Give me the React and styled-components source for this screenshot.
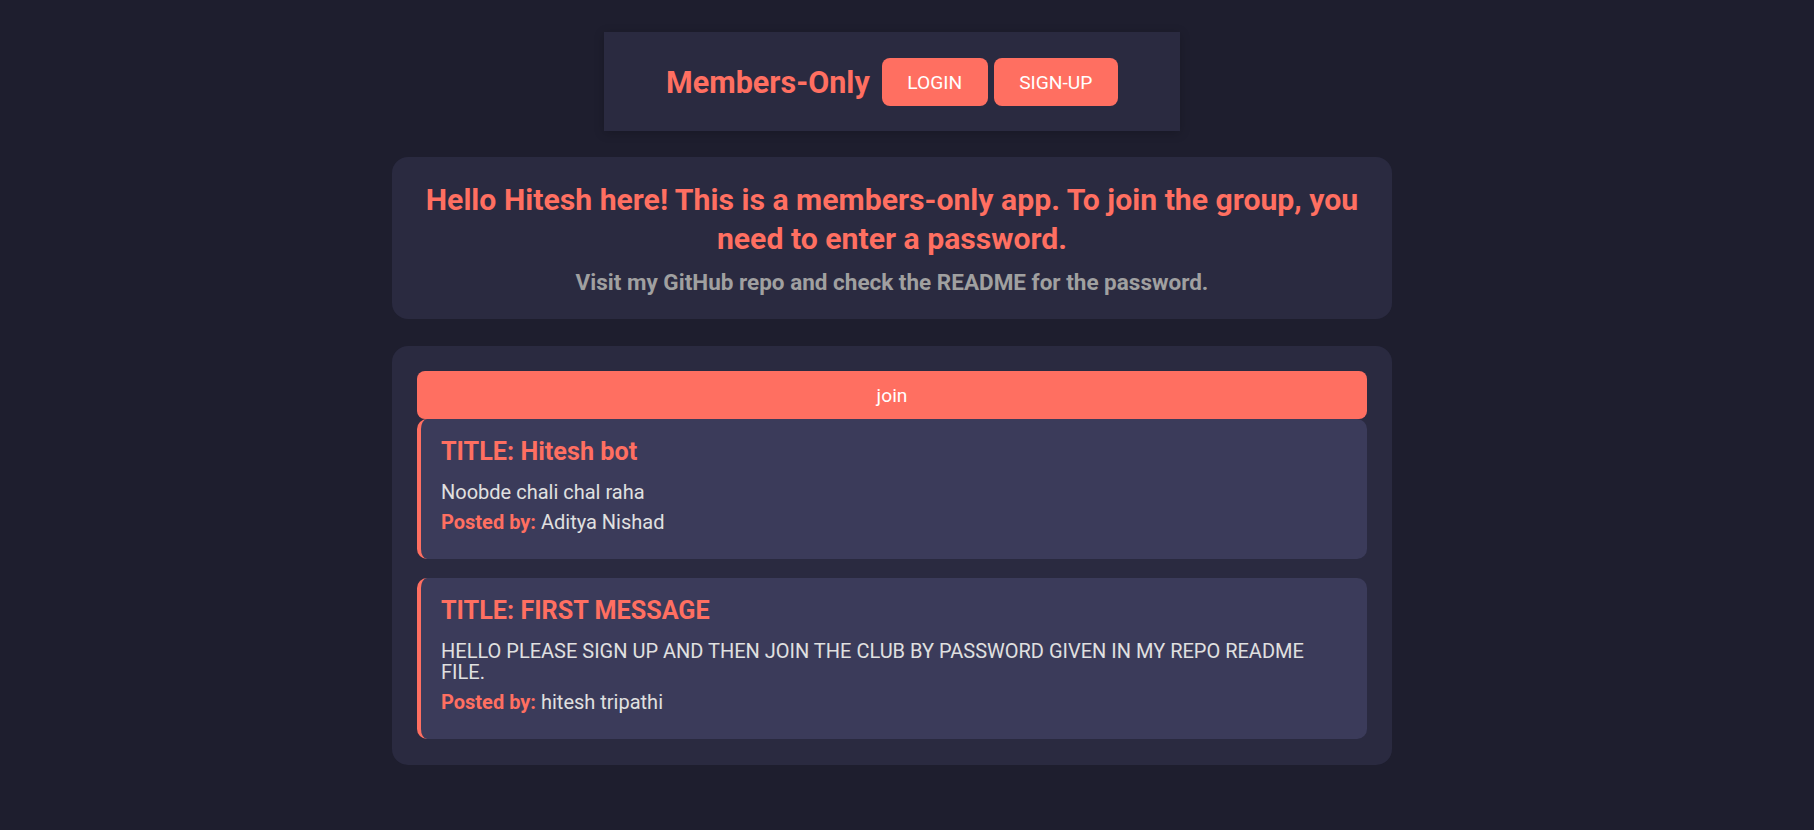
import React from "react";
import styled, { createGlobalStyle } from "styled-components";

const GlobalStyle = createGlobalStyle`
  body {
    margin: 0;
    background-color: #1e1e2e;
    font-family: Roboto, "Liberation Sans", sans-serif;
    color: #e0e0e0;
  }
`;

const Page = styled.div`
  display: flex;
  flex-direction: column;
  align-items: center;
  padding: 32px 30px 40px 0;
`;

const Nav = styled.nav`
  display: flex;
  align-items: center;
  gap: 12px;
  padding: 26px 62px 25px;
  background-color: #2a2a40;
  box-shadow: 0 2px 10px rgba(0, 0, 0, 0.2);
`;

const Brand = styled.h1`
  margin: 0;
  font-size: 30.5px;
  font-weight: 700;
  color: #ff6f61;
`;

const NavLinks = styled.div`
  display: flex;
  gap: 6px;
`;

const NavButton = styled.a`
  display: flex;
  align-items: center;
  justify-content: center;
  height: 48px;
  padding: 0 25.5px;
  background-color: #ff6f61;
  color: #fff;
  border-radius: 8px;
  font-size: 19.2px;
  text-decoration: none;
  cursor: pointer;
`;

const Card = styled.section`
  box-sizing: border-box;
  width: 1000px;
  margin-top: ${(p) => p.$top}px;
  padding: ${(p) => p.$padding};
  background-color: #2a2a40;
  border-radius: 16px;
`;

const Welcome = styled.h2`
  margin: 0 0 11.5px;
  text-align: center;
  font-size: 30.2px;
  line-height: 39px;
  font-weight: 700;
  color: #ff6f61;
`;

const Hint = styled.p`
  margin: 0;
  text-align: center;
  font-size: 22.5px;
  line-height: 26px;
  font-weight: 700;
  color: #a0a0a0;
`;

const JoinButton = styled.button`
  display: block;
  width: 100%;
  height: 48px;
  border: none;
  border-radius: 8px;
  background-color: #ff6f61;
  color: #fff;
  font-family: inherit;
  font-size: 19.2px;
  cursor: pointer;
`;

const MessageList = styled.div`
  display: flex;
  flex-direction: column;
  gap: 19px;
`;

const Message = styled.article`
  padding: 18px 20px 26px;
  background-color: #3b3b5a;
  border-left: 4px solid #ff6f61;
  border-radius: 10px;
`;

const MessageTitle = styled.h3`
  margin: 0 0 15px;
  font-size: 25.2px;
  line-height: 30px;
  font-weight: 700;
  color: #ff6f61;
`;

const MessageText = styled.p`
  margin: 0 0 ${(p) => (p.$last ? 0 : 9)}px;
  font-size: 20px;
  line-height: 21px;
  color: #e0e0e0;
`;

const Label = styled.strong`
  color: #ff6f61;
`;

const messages = [
  { title: "Hitesh bot", text: "Noobde chali chal raha", author: "Aditya Nishad" },
  {
    title: "FIRST MESSAGE",
    text: "HELLO PLEASE SIGN UP AND THEN JOIN THE CLUB BY PASSWORD GIVEN IN MY REPO README FILE.",
    author: "hitesh tripathi",
  },
];

export default function App() {
  return (
    <>
      <GlobalStyle />
      <Page>
        <Nav>
          <Brand>Members-Only</Brand>
          <NavLinks>
            <NavButton>LOGIN</NavButton>
            <NavButton>SIGN-UP</NavButton>
          </NavLinks>
        </Nav>

        <Card $top={26} $padding="22.5px 25px 24px">
          <Welcome>
            Hello Hitesh here! This is a members-only app. To join the group, you need to enter a password.
          </Welcome>
          <Hint>Visit my GitHub repo and check the README for the password.</Hint>
        </Card>

        <Card $top={27} $padding="25px 25px 26px">
          <JoinButton>join</JoinButton>
          <MessageList>
            {messages.map((m, i) => (
              <Message key={i}>
                <MessageTitle>TITLE: {m.title}</MessageTitle>
                <MessageText>{m.text}</MessageText>
                <MessageText $last>
                  <Label>Posted by:</Label> {m.author}
                </MessageText>
              </Message>
            ))}
          </MessageList>
        </Card>
      </Page>
    </>
  );
}
